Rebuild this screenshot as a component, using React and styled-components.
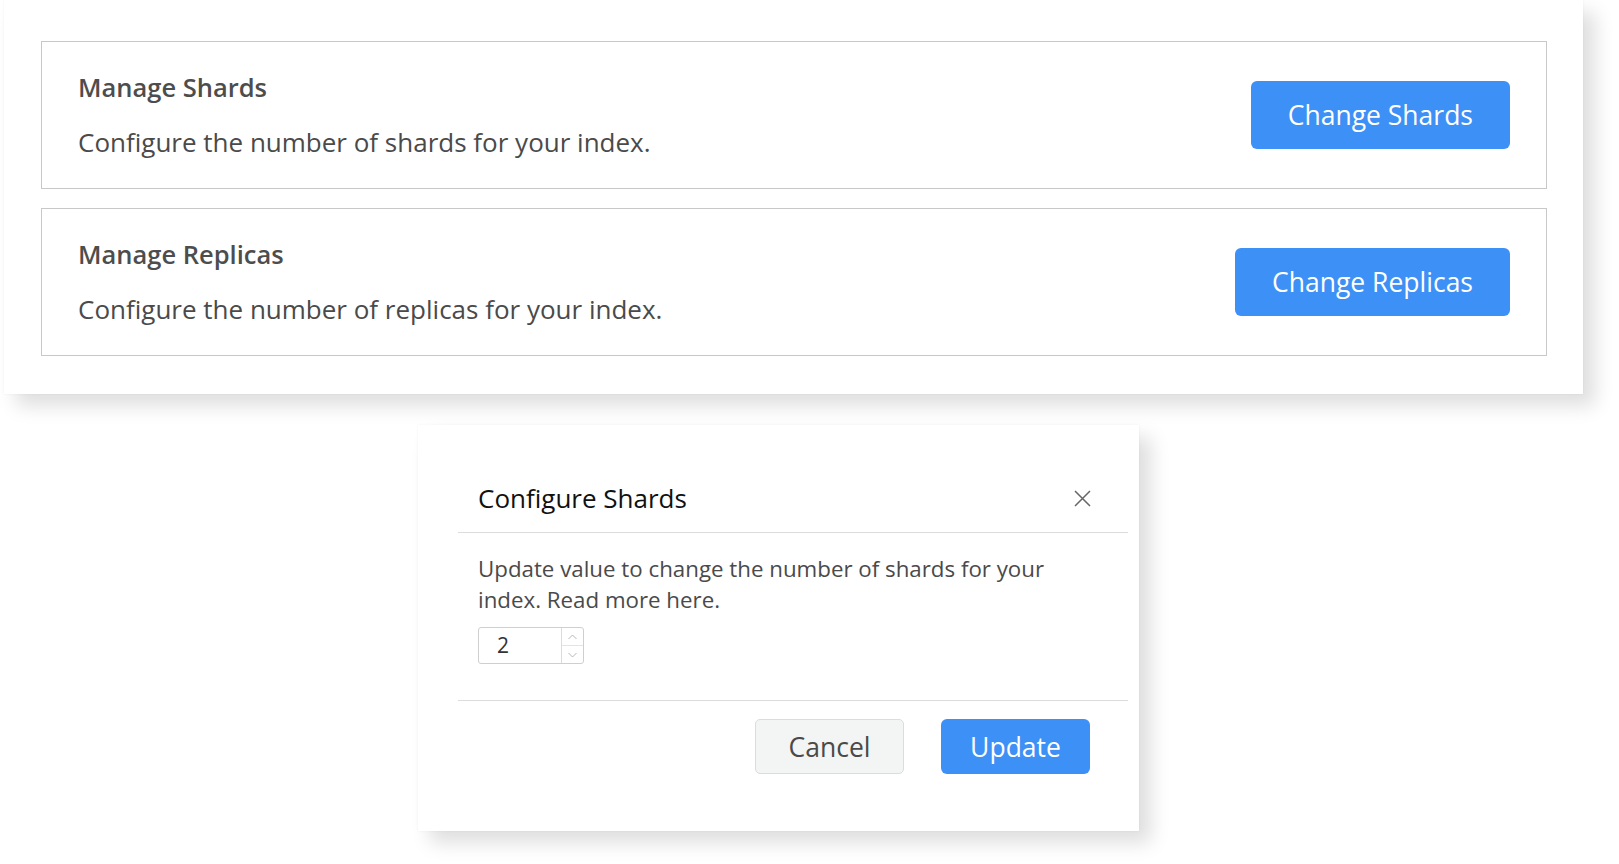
import styled, { createGlobalStyle } from 'styled-components';

const GlobalStyle = createGlobalStyle`
  body {
    margin: 0;
    background: #ffffff;
    font-family: 'Open Sans', 'Liberation Sans', sans-serif;
  }
`;

const Page = styled.div`
  width: 1619px;
  height: 864px;
  overflow: hidden;
  padding-left: 4px;
  box-sizing: border-box;
`;

const SettingsCard = styled.div`
  width: 1579px;
  box-sizing: border-box;
  padding: 41px 36px 38px 37px;
  background: #fff;
  box-shadow: 12px 12px 18px rgba(0, 0, 0, 0.13), 0 0 2px rgba(0, 0, 0, 0.06);
  display: flex;
  flex-direction: column;
  gap: 19px;
`;

const SettingRow = styled.div`
  display: flex;
  align-items: center;
  justify-content: space-between;
  border: 1px solid #c8c8c8;
  padding: 29px 36px 30px 36px;

  .setting-title {
    font-size: 25.5px;
    line-height: 32px;
    font-weight: 600;
    color: #4d4d4d;
  }

  .setting-desc {
    margin-top: 23px;
    font-size: 26px;
    line-height: 32px;
    color: #4a4a4a;
  }
`;

const PrimaryButton = styled.button`
  font-family: 'Open Sans', 'Liberation Sans', sans-serif;
  background: #3d90f5;
  color: #fff;
  border: none;
  border-radius: 6px;
  font-size: ${(p) => p.fontSize || '26.5px'};
  height: ${(p) => p.height || '68px'};
  width: ${(p) => p.width || 'auto'};
  padding: 0 ${(p) => p.padX || '36px'};
  cursor: pointer;
`;

const ModalWrap = styled.div`
  margin: 31px 0 0 414px;
  width: 721px;
  background: #fff;
  box-shadow: 12px 12px 18px rgba(0, 0, 0, 0.13), 0 0 2px rgba(0, 0, 0, 0.06);
  padding: 0 11px 0 40px;
  box-sizing: border-box;
`;

const ModalHeader = styled.div`
  display: flex;
  align-items: center;
  justify-content: space-between;
  padding: 55px 37px 16px 20px;
  border-bottom: 1px solid #dcdcdc;

  .modal-title {
    font-size: 26px;
    line-height: 36px;
    color: #111;
  }
`;

const CloseIcon = styled.svg`
  width: 17px;
  height: 17px;
  stroke: #666;
  stroke-width: 1.5;
`;

const ModalBody = styled.div`
  padding: 20px 20px 36px 20px;
  border-bottom: 1px solid #dcdcdc;

  .modal-text {
    font-size: 22.3px;
    line-height: 31px;
    color: #4a4a4a;
    max-width: 610px;
  }
`;

const NumberField = styled.div`
  margin-top: 12px;
  display: flex;
  width: 106px;
  height: 37px;
  box-sizing: border-box;
  border: 1px solid #cfcfcf;
  border-radius: 3px;

  .value {
    flex: 1;
    font-size: 21px;
    line-height: 35px;
    padding-left: 18px;
    color: #333;
  }
`;

const Spinner = styled.div`
  width: 21px;
  border-left: 1px solid #dcdcdc;
  display: flex;
  flex-direction: column;

  span {
    flex: 1;
    display: flex;
    align-items: center;
    justify-content: center;
  }

  span + span {
    border-top: 1px solid #e4e4e4;
  }

  svg {
    width: 9px;
    height: 6px;
    stroke: #b8b8b8;
    fill: none;
    stroke-width: 1;
  }
`;

const ModalFooter = styled.div`
  display: flex;
  justify-content: flex-end;
  gap: 37px;
  padding: 18px 38px 57px 0;
`;

const SecondaryButton = styled.button`
  font-family: 'Open Sans', 'Liberation Sans', sans-serif;
  background: #f3f4f4;
  color: #4a4a4a;
  border: 1px solid #dcdcdc;
  border-radius: 5px;
  font-size: 26.5px;
  height: 55px;
  width: 149px;
  cursor: pointer;
`;

const settings = [
  { title: 'Manage Shards', desc: 'Configure the number of shards for your index.', action: 'Change Shards' },
  { title: 'Manage Replicas', desc: 'Configure the number of replicas for your index.', action: 'Change Replicas' },
];

const App = () => {
  return (
    <Page>
      <GlobalStyle />
      <SettingsCard>
        {settings.map((s) => (
          <SettingRow key={s.title}>
            <div>
              <div className="setting-title">{s.title}</div>
              <div className="setting-desc">{s.desc}</div>
            </div>
            <PrimaryButton padX="37px">{s.action}</PrimaryButton>
          </SettingRow>
        ))}
      </SettingsCard>

      <ModalWrap>
        <ModalHeader>
          <div className="modal-title">Configure Shards</div>
          <CloseIcon viewBox="0 0 17 17">
            <path d="M1 1 L16 16 M16 1 L1 16" />
          </CloseIcon>
        </ModalHeader>
        <ModalBody>
          <div className="modal-text">
            Update value to change the number of shards for your index. Read more here.
          </div>
          <NumberField>
            <div className="value">2</div>
            <Spinner>
              <span>
                <svg viewBox="0 0 9 6">
                  <path d="M0.5 5 L4.5 1 L8.5 5" />
                </svg>
              </span>
              <span>
                <svg viewBox="0 0 9 6">
                  <path d="M0.5 1 L4.5 5 L8.5 1" />
                </svg>
              </span>
            </Spinner>
          </NumberField>
        </ModalBody>
        <ModalFooter>
          <SecondaryButton>Cancel</SecondaryButton>
          <PrimaryButton height="55px" width="149px" padX="0">
            Update
          </PrimaryButton>
        </ModalFooter>
      </ModalWrap>
    </Page>
  );
};

export default App;
